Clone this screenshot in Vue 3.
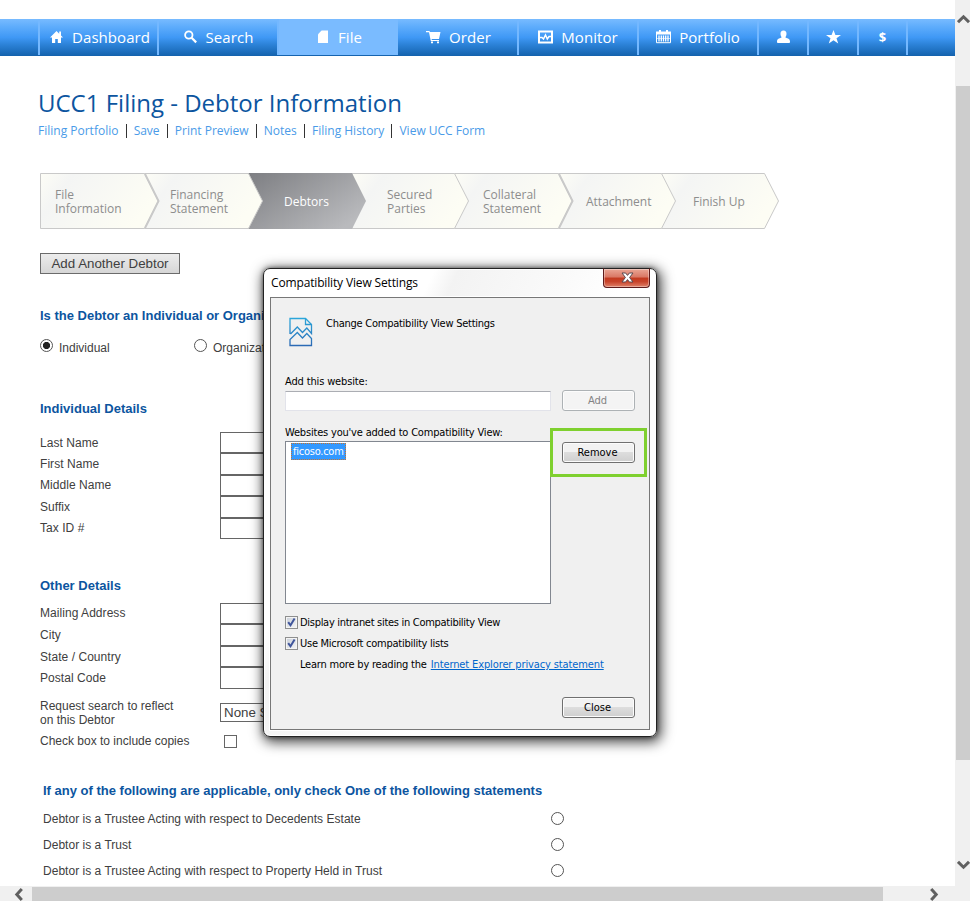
<script setup>
const nav = [
  { label: 'Dashboard', icon: 'home', cls: 'first' },
  { label: 'Search', icon: 'search' },
  { label: 'File', icon: 'file', cls: 'active' },
  { label: 'Order', icon: 'cart' },
  { label: 'Monitor', icon: 'monitor' },
  { label: 'Portfolio', icon: 'calendar' },
  { icon: 'user', cls: 'small' },
  { icon: 'star', cls: 'small' },
  { icon: 'dollar', cls: 'small last' },
]
const icons = {
  home: 'M6.5 1 L0 7.5 H2 V13 H5.2 V9 H7.8 V13 H11 V7.5 H13 L11 5.4 V1.5 H9.2 V3.7 Z',
  file: 'M4.6 0.5 H11 V13 H1 V4.2 Z',
  cart: 'M0 1 H3.4 L4 2 H14.5 L13 9 H5.6 L5.8 10 H13 V11 H4.8 L3 2.2 H0 Z M5 11.6 H7 V13.2 H5 Z M11 11.6 H13 V13.2 H11 Z',
  user: 'M6.5 0.5 C8.6 .5 9.6 2 9.5 4 C9.4 5.6 8.9 6.6 8.2 7.2 C9.5 8.3 13 8 13 11.5 V12.2 Q13 13 12 13 H1 Q0 13 0 12.2 V11.5 C0 8 3.5 8.3 4.8 7.2 C4.1 6.6 3.6 5.6 3.5 4 C3.4 2 4.4 .5 6.5 .5 Z',
  star: 'M7.5 0 L9.4 4.9 H15 L10.5 8.2 L12.2 13.4 L7.5 10.2 L2.8 13.4 L4.5 8.2 L0 4.9 H5.6 Z',
}
const links = ['Filing Portfolio', 'Save', 'Print Preview', 'Notes', 'Filing History', 'View UCC Form']
const steps = [
  ['File', 'Information'],
  ['Financing', 'Statement'],
  ['Debtors'],
  ['Secured', 'Parties'],
  ['Collateral', 'Statement'],
  ['Attachment'],
  ['Finish Up'],
]
const individual = ['Last Name', 'First Name', 'Middle Name', 'Suffix', 'Tax ID #']
const other = ['Mailing Address', 'City', 'State / Country', 'Postal Code']
const statements = [
  'Debtor is a Trustee Acting with respect to Decedents Estate',
  'Debtor is a Trust',
  'Debtor is a Trustee Acting with respect to Property Held in Trust',
]
</script>

<template>
  <div class="window">
    <main class="page">
      <nav class="nav">
        <a v-for="(n, i) in nav" :key="i" class="nav-item" :class="n.cls">
          <svg v-if="icons[n.icon]" class="ic" width="15" height="14" :viewBox="n.icon === 'file' ? '-2 0 15 14' : n.icon === 'star' || n.icon === 'cart' ? '0 0 15 14' : '-1 0 15 14'">
            <path :d="icons[n.icon]" fill="#fff" />
          </svg>
          <svg v-else-if="n.icon === 'search'" class="ic" width="15" height="14" viewBox="-1 0 15 14" fill="none" stroke="#fff">
            <circle cx="4.8" cy="5" r="3.7" stroke-width="1.8" />
            <path d="M7.6 7.8 L12.2 12.4" stroke-width="2.2" />
          </svg>
          <svg v-else-if="n.icon === 'monitor'" class="ic" width="15" height="14" viewBox="0 0 15 14" fill="none" stroke="#fff">
            <rect x="1" y="1.5" width="13" height="11" stroke-width="2" />
            <path d="M2 7.5 H4 L5.5 9 L7.5 5 L9.3 9 L11 6.5 H13" stroke-width="1.5" />
          </svg>
          <svg v-else-if="n.icon === 'calendar'" class="ic" width="15" height="14" viewBox="0 0 15 14" fill="none" stroke="#fff">
            <path d="M0 1.5 H15 V4.5 H0 Z M3 0 H5 V2 H3 Z M10 0 H12 V2 H10 Z" fill="#fff" stroke="none" />
            <path d="M.5 4 V12.7 H14.5 V4" />
            <path d="M3 5.5 V11.5 M5.3 5.5 V11.5 M7.5 5.5 V11.5 M9.7 5.5 V11.5 M12 5.5 V11.5" stroke-width="1.3" />
            <path d="M1 8.5 H14" stroke-width=".6" />
          </svg>
          <span v-else class="dollar">$</span>
          <span v-if="n.label" class="nav-label">{{ n.label }}</span>
        </a>
      </nav>

      <h1>UCC1 Filing - Debtor Information</h1>
      <div class="links">
        <a v-for="l in links" :key="l">{{ l }}</a>
      </div>

      <div class="steps">
        <svg class="steps-bg" width="742" height="58" viewBox="39 172 742 58">
          <defs>
            <linearGradient id="pale" x1="0" y1="0" x2="1" y2=".35">
              <stop offset="0" stop-color="#fdfdf6" />
              <stop offset=".25" stop-color="#f4f5f4" />
              <stop offset="1" stop-color="#fdfdf4" />
            </linearGradient>
            <linearGradient id="dark" x1="0" y1="0" x2="1" y2=".7">
              <stop offset="0" stop-color="#7d7e82" />
              <stop offset="1" stop-color="#b9babd" />
            </linearGradient>
          </defs>
          <g fill="url(#pale)" stroke="#c9c9c9">
            <path d="M661.5 173.5 H764.5 L778.5 201 L764.5 228.5 H661.5 Z" />
            <path d="M558.5 173.5 H661.5 L675.5 201 L661.5 228.5 H558.5 Z" />
            <path d="M454.5 173.5 H558.5 L572.5 201 L558.5 228.5 H454.5 Z" />
            <path d="M352 173.5 H454.5 L468.5 201 L454.5 228.5 H352 Z" />
          </g>
          <path d="M248 173 H352 L366 201 L352 229 H248 Z" fill="url(#dark)" />
          <g fill="url(#pale)" stroke="#c9c9c9">
            <path d="M144.5 173.5 H248.5 L262.5 201 L248.5 228.5 H144.5 Z" />
            <path d="M40.5 173.5 H144.5 L158.5 201 L144.5 228.5 H40.5 Z" />
          </g>
          <path d="M145 174 L158.5 201 L145 228 M559 174 L572.5 201 L559 228" fill="none" stroke="#c9c9c9" stroke-width="2" />
        </svg>
        <div v-for="(s, i) in steps" :key="i" class="step" :class="'s' + i">
          <span v-for="t in s" :key="t">{{ t }}</span>
        </div>
      </div>

      <button class="add-debtor">Add Another Debtor</button>

      <h2 class="q">Is the Debtor an Individual or Organization?</h2>
      <div class="radios">
        <i class="radio on"></i><span class="r1">Individual</span>
        <i class="radio"></i><span>Organization</span>
      </div>

      <h2 class="h-ind">Individual Details</h2>
      <div class="fields f-ind">
        <label v-for="f in individual" :key="f"><span>{{ f }}</span><i class="box"></i></label>
      </div>

      <h2 class="h-oth">Other Details</h2>
      <div class="fields f-oth">
        <label v-for="f in other" :key="f"><span>{{ f }}</span><i class="box"></i></label>
      </div>
      <div class="request">
        <span>Request search to reflect<br />on this Debtor</span>
        <i class="select">None Selected</i>
      </div>
      <div class="copies"><span>Check box to include copies</span><i class="check"></i></div>

      <h2 class="h-any">If any of the following are applicable, only check One of the following statements</h2>
      <div class="statements">
        <div v-for="s in statements" :key="s"><span>{{ s }}</span><i class="radio"></i></div>
      </div>
    </main>

    <aside class="vbar">
      <svg class="up" width="13" height="10" viewBox="0 0 13 10"><path d="M1 8.2 L6.5 2.8 L12 8.2" fill="none" stroke="#606060" stroke-width="3" /></svg>
      <div class="vthumb"></div>
      <svg class="down" width="13" height="10" viewBox="0 0 13 10"><path d="M1 1.8 L6.5 7.2 L12 1.8" fill="none" stroke="#606060" stroke-width="3" /></svg>
    </aside>
    <footer class="hbar">
      <svg class="left" width="10" height="13" viewBox="0 0 10 13"><path d="M7.8 1 L2.8 6.5 L7.8 12" fill="none" stroke="#606060" stroke-width="3" /></svg>
      <div class="hthumb"></div>
      <svg class="right" width="10" height="13" viewBox="0 0 10 13"><path d="M2.2 1 L7.2 6.5 L2.2 12" fill="none" stroke="#606060" stroke-width="3" /></svg>
    </footer>

    <section class="dialog">
      <header>
        <span class="d-title">Compatibility View Settings</span>
        <button class="close-x">
          <svg width="13" height="11" viewBox="0 0 13 11">
            <path d="M1 1 H4.6 L6.5 3.4 L8.4 1 H12 L8.6 5.5 L12 10 H8.4 L6.5 7.6 L4.6 10 H1 L4.4 5.5 Z" fill="#fff" stroke="#5b4a50" stroke-width="1" />
          </svg>
        </button>
      </header>
      <div class="panel">
        <div class="intro">
          <svg width="24" height="30" viewBox="0 0 24 30" fill="none" stroke-width="1.3">
            <defs>
              <linearGradient id="torn" gradientUnits="userSpaceOnUse" x1="0" y1="0" x2="0" y2="30">
                <stop offset="0" stop-color="#2ba9dc" />
                <stop offset="1" stop-color="#2b67b3" />
              </linearGradient>
            </defs>
            <g stroke="url(#torn)">
              <path d="M1 17 V1.5 H16.5 L22.5 7.5 V16.5 L17.8 11 L13.5 15.5 L8.3 10 L1.5 17" />
              <path d="M16.5 1.5 V7.5 H22.5" />
              <path d="M1 28.5 V22.5 L8.3 15.5 L13.5 21 L17.8 16.5 L22.5 21.5 V28.5 Z" />
            </g>
          </svg>
          <span class="t-change">Change Compatibility View Settings</span>
        </div>
        <div class="t-add">Add this website:</div>
        <div class="line"><div class="input"></div><button class="btn off">Add</button></div>
        <div class="t-web">Websites you've added to Compatibility View:</div>
        <div class="line list-line">
          <div class="list"><span class="picked">ficoso.com</span></div>
          <div class="mark"><button class="btn">Remove</button></div>
        </div>
        <div class="opt o1">
          <i class="cb"><svg width="11" height="11" viewBox="0 0 11 11"><path d="M2.2 5.2 L4.5 8.3 L8.6 1.6" fill="none" stroke="#3f559b" stroke-width="2" /></svg></i>
          <span class="t-disp">Display intranet sites in Compatibility View</span>
        </div>
        <div class="opt o2">
          <i class="cb"><svg width="11" height="11" viewBox="0 0 11 11"><path d="M2.2 5.2 L4.5 8.3 L8.6 1.6" fill="none" stroke="#3f559b" stroke-width="2" /></svg></i>
          <span class="t-use">Use Microsoft compatibility lists</span>
        </div>
        <div class="learn"><span class="t-learn">Learn more by reading the</span><a>Internet Explorer privacy statement</a></div>
        <button class="btn close">Close</button>
      </div>
    </section>
  </div>
</template>

<style>
body { margin: 0; background: #fff; overflow: hidden; }
</style>

<style scoped>
* { box-sizing: border-box; }
.window {
  position: relative; width: 970px; height: 901px; overflow: hidden;
  display: grid; grid-template: 886px 15px / 955px 15px;
  font: 12px/14px "Liberation Sans", Arial, sans-serif; color: #404040; background: #fff;
}
.page { overflow: hidden; padding-top: 19px; display: flex; flex-direction: column; align-items: flex-start; }
.nav {
  width: 955px; height: 37px; flex: none; padding-left: 38px; display: flex;
  background: linear-gradient(#78bbff 0, #5fadfc 20%, #3f98f5 50%, #2b81d6 70%, #1462ad 100%);
}
.nav-item {
  width: 120px; height: 36px; border-left: 2px solid #74b8ff; display: flex; align-items: center; justify-content: center;
  gap: 8px; font: 15px/20px "Open Sans", sans-serif; color: #fff;
}
.nav-label { letter-spacing: .05px; }
.nav-item.first { width: 119px; padding-left: 2px; }
.nav-item.active { background: #7abbff; width: 121px; }
.nav-item.active + .nav-item { width: 119px; border-left-color: transparent; }
.nav-item.small { width: 50px; }
.nav-item.last { width: 51px; border-right: 2px solid #74b8ff; }
.ic { flex: none; margin-bottom: 1px; }
.dollar { font: bold 13px/18px "Open Sans", sans-serif; }
h1 { margin: 29px 0 0 38px; font: 24px/36px "Open Sans", sans-serif; color: #0c559f; white-space: nowrap; }
.links { margin: 3px 0 0 38px; display: flex; font: 12px/14px "Open Sans", sans-serif; color: #4a9be8; }
.links a { white-space: nowrap; padding-right: 7.2px; }
.links a + a { padding-left: 7px; border-left: 1px solid #333; }

.steps { position: relative; margin: 34px 0 0 39px; width: 742px; height: 58px; display: flex; font: 12px/14px "Open Sans", sans-serif; color: #8d8d8d; flex: none; }
.steps-bg { position: absolute; left: 0; top: 0; }
.step { position: relative; display: flex; flex-direction: column; justify-content: center; white-space: nowrap; flex: none; padding-top: 2px; }
.s0 { width: 115px; margin-left: 16px; }
.s1 { width: 114px; }
.s2 { width: 103px; color: #fff; padding-top: 1px; }
.s3 { width: 96px; }
.s4 { width: 103px; }
.s5 { width: 107px; padding-top: 1px; }
.s6 { padding-top: 1px; }

.add-debtor {
  margin: 23px 0 0 40px; width: 140px; height: 21px; padding: 0; border: 1px solid #6b6b6b; flex: none;
  background: linear-gradient(#ececec, #d6d6d6); color: #404040; font: 13.33px/19px "Liberation Sans", Arial, sans-serif;
}
h2 { margin: 0 0 0 40px; font: bold 13px/16px "Liberation Sans", Arial, sans-serif; color: #0c559f; white-space: nowrap; }
.q { margin-top: 34px; }
.radios { margin: 15px 0 0 40px; height: 17px; display: flex; }
.radio { width: 13px; height: 13px; border: 1px solid #555; border-radius: 50%; background: #fff; flex: none; display: block; }
.radio.on { background: radial-gradient(circle, #222 0 3.2px, #fff 4px); }
.radios span { margin: 2px 0 0 6px; }
.radios .r1 { width: 135px; }
.h-ind { margin-top: 45px; }
.fields { margin-left: 40px; display: flex; flex-direction: column; }
.fields label { display: flex; align-items: center; height: 21.4px; }
.fields span { width: 180px; letter-spacing: .05px; }
.box { width: 220px; height: 100%; border: 1px solid #666; }
.f-ind { margin-top: 15px; }
.h-oth { margin-top: 39px; }
.f-oth { margin-top: 9px; }
.f-oth label { height: 21.5px; }
.f-oth label:first-child span { margin-top: -1px; }
.request { margin: 10px 0 0 40px; display: flex; height: 28px; }
.request span { width: 180px; }
.select { margin-top: 4px; height: 19px; width: 200px; border: 1px solid #666; font: 13.33px/17px "Liberation Sans", Arial, sans-serif; padding-left: 3px; }
.copies { margin: 7px 0 0 40px; display: flex; align-items: center; height: 14px; }
.copies span { width: 184px; }
.check { width: 13px; height: 13px; border: 1px solid #666; margin-top: 1px; }
.h-any { margin: 35px 0 0 43px; }
.statements { margin: 13px 0 0 43px; display: flex; flex-direction: column; gap: 12px; }
.statements div { display: flex; height: 14px; }
.statements span { width: 508px; letter-spacing: .025px; }

.vbar { background: #f0f0f0; display: flex; flex-direction: column; align-items: center; padding-left: 1px; }
.up { margin-top: 14px; flex: none; }
.vthumb { width: 14px; height: 674px; margin-top: 62px; background: #cdcdcd; flex: none; }
.down { margin-top: 100px; flex: none; }
.hbar { grid-column: 1 / 3; background: #f0f0f0; display: flex; align-items: center; }
.left { margin-left: 14px; }
.hthumb { width: 851px; height: 14px; margin: 1px 0 0 8px; background: #cdcdcd; align-self: flex-start; }
.right { margin-left: 46px; }
.left, .right { margin-top: 2px; overflow: visible; }

.dialog {
  position: absolute; left: 263px; top: 268px; width: 394px; height: 469px; border: 1px solid #222; border-radius: 7px;
  background: linear-gradient(115deg, #fff 0 28%, #f3f3f3 32%, #fafafa 50%, #fff 60%); padding: 0 6px;
  box-shadow: inset 0 0 0 1px #fff, 0 0 4px rgba(0,0,0,.5), 2px 3px 13px 2px rgba(0,0,0,.75);
  font: 11px/14px "DejaVu Sans Condensed", "DejaVu Sans", sans-serif; font-stretch: condensed; color: #000;
}
header { display: flex; height: 28px; justify-content: space-between; }
.d-title { font: 12px/16px "Open Sans", sans-serif; margin: 6px 0 0 1px; white-space: nowrap; letter-spacing: -.15px; }
.close-x {
  width: 47px; height: 20px; margin: -1px 0 0; padding: 0; border: 1px solid #5e1b1b; border-top: 1px solid #222; border-radius: 0 0 4px 4px;
  display: flex; align-items: center; justify-content: center;
  background: linear-gradient(#eaa695 0, #d97764 45%, #c33a20 50%, #c8432a 70%, #e0826a 100%);
  box-shadow: inset 0 0 0 1px rgba(255,255,255,.35);
}
.close-x svg { margin-left: 2px; margin-bottom: 1px; }
.panel { height: 433px; border: 1px solid #777; background: #f0f0f0; display: flex; flex-direction: column; padding-left: 14px; box-shadow: 0 0 0 1px #fff; }
.panel span, .panel a, .t-add, .t-web { white-space: nowrap; }
.intro { display: flex; margin: 19px 0 0 4px; height: 32px; }
.t-change { margin-left: 13px; letter-spacing: -.25px; }
.t-add { margin-top: 26px; letter-spacing: -.15px; }
.line { display: flex; margin-top: 1px; flex: none; }
.input { width: 266px; height: 20px; margin-top: 1px; border: 1px solid #e2e3ea; border-top-color: #abadb3; background: #fff; flex: none; }
.btn {
  width: 73px; height: 21px; padding: 1px 2px 0 0; border: 1px solid #707070; border-radius: 3px; font: inherit; color: #000; flex: none;
  background: linear-gradient(#f2f2f2 0 45%, #dddddd 50%, #cfcfcf); box-shadow: inset 0 0 0 1px #fcfcfc;
}
.btn.off { margin-left: 11px; background: #f4f4f4; border-color: #adb2b5; color: #838383; }
.t-web { margin-top: 15px; letter-spacing: -.19px; }
.list { width: 266px; height: 163px; border: 1px solid #828790; background: #fff; padding: 1px 5px; flex: none; display: flex; align-items: flex-start; }
.picked { background: #3399ff; color: #fff; outline: 1px dotted #c8732c; outline-offset: -1px; width: 55px; height: 17px; padding: 2px 0 0 2px; letter-spacing: -.25px; }
.mark { position: relative; width: 97px; height: 49px; margin: -13px 0 0 -1px; border: 3px solid #7fd02f; padding: 11px 0 0 9px; flex: none; }
.opt { display: flex; align-items: center; height: 14px; gap: 2px; }
.opt span { padding-top: 2px; }
.o1 { margin-top: 11px; }
.o2 { margin-top: 7px; }
.t-disp { letter-spacing: -.29px; }
.t-use { letter-spacing: -.26px; }
.t-learn { letter-spacing: -.2px; }
.cb { width: 13px; height: 13px; border: 1px solid #8e8f8f; background: linear-gradient(135deg, #c9cfd9, #f6f6f6); box-shadow: inset 0 0 0 1px #f4f4f4; display: flex; }
.learn { margin: 8px 0 0 15px; display: flex; gap: 4px; }
.learn a { color: #06c; text-decoration: underline; letter-spacing: -.12px; }
.close { margin: 25px 0 0 277px; }
</style>
